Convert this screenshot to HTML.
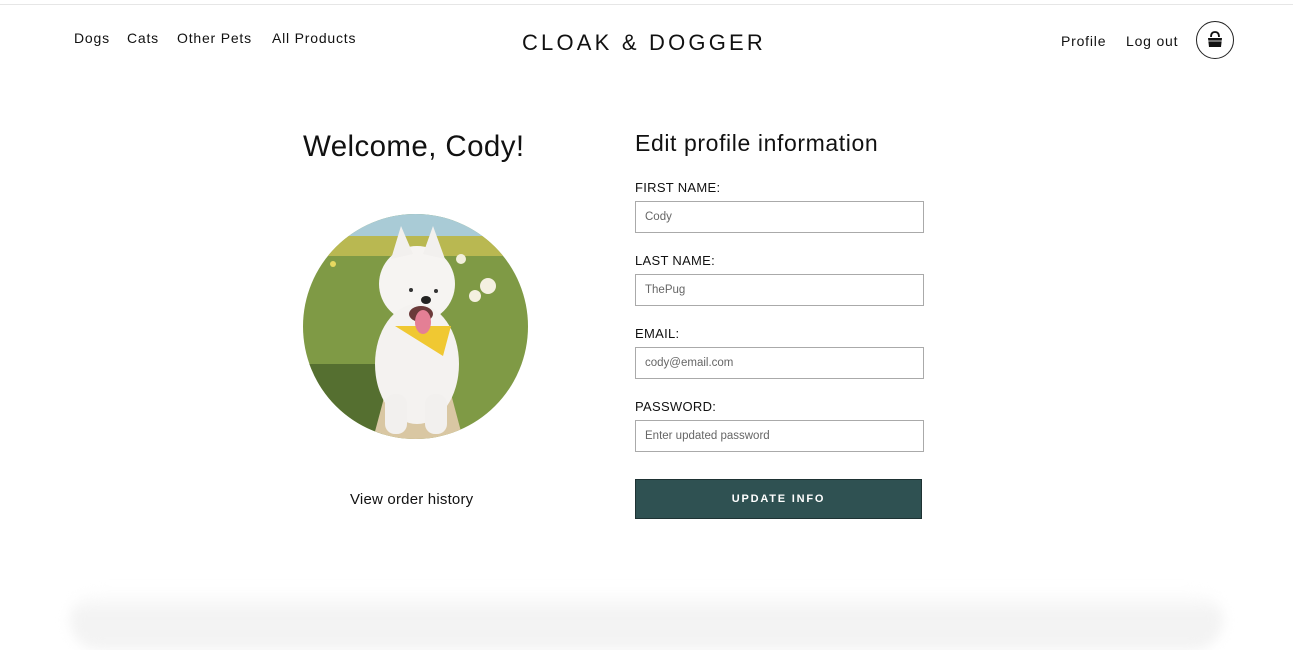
<!DOCTYPE html>
<html><head><meta charset="utf-8"><style>
body{margin:0;width:1293px;height:621px;overflow:hidden;background:#fff;font-family:"Liberation Sans",sans-serif;color:#111;position:relative}
.topline{position:absolute;top:4px;left:0;right:0;height:1px;background:#e6e6e6}
.nav a{position:absolute;top:30px;font-size:14px;letter-spacing:.8px;color:#111}
.logo{position:absolute;top:30px;left:0;width:1288px;text-align:center;font-size:22px;letter-spacing:3.2px}
.cart{position:absolute;left:1196px;top:21px;width:36px;height:36px;border:1px solid #222;border-radius:50%}
h1{position:absolute;left:303px;top:130px;margin:0;font-weight:400;font-size:29.5px;letter-spacing:.4px}
h2{position:absolute;left:635px;top:130px;margin:0;font-weight:400;font-size:23px;letter-spacing:.6px}
.lbl{position:absolute;left:635px;font-size:13px;letter-spacing:.3px}
.inp{position:absolute;left:635px;width:289px;height:32px;border:1px solid #aaa;box-sizing:border-box;font-size:11.5px;color:#666;padding:9px 9px;line-height:13px}
.btn{position:absolute;left:635px;top:479px;width:287px;height:40px;background:#2f5152;border:1px solid #1e3233;box-sizing:border-box;color:#fff;font-weight:700;font-size:11px;letter-spacing:1.8px;text-align:center;line-height:38px}
.hist{position:absolute;left:350px;top:491px;font-size:15px;letter-spacing:.2px}
.shadow{position:absolute;left:70px;right:70px;top:590px;height:60px;background:linear-gradient(#fff,#f3f3f3 40%);border-radius:30px;filter:blur(6px)}
</style></head><body>
<div class="topline"></div>
<div class="nav"><a style="left:74px">Dogs</a><a style="left:127px">Cats</a><a style="left:177px">Other Pets</a><a style="left:272px">All Products</a>
<a style="left:1061px;top:33px">Profile</a><a style="left:1126px;top:33px">Log out</a></div>
<div class="logo">CLOAK &amp; DOGGER</div>
<div class="cart"><svg width="36" height="36" viewBox="0 0 36 36"><path d="M14 15 Q14 10 18 10 Q22 10 22 15" fill="none" stroke="#111" stroke-width="1.8"/><path d="M11 16h14l-1 9h-12z" fill="#111"/><path d="M11 19h14" stroke="#fff" stroke-width=".8"/></svg></div>
<h1>Welcome, Cody!</h1>
<svg style="position:absolute;left:303px;top:214px" width="225" height="225" viewBox="0 0 225 225">
<defs><clipPath id="c"><circle cx="112.5" cy="112.5" r="112.5"/></clipPath></defs>
<g clip-path="url(#c)">
<rect width="225" height="225" fill="#7f9a45"/>
<rect width="225" height="25" fill="#a9cbd6"/>
<rect y="22" width="225" height="20" fill="#b9b851"/>
<rect x="0" y="150" width="80" height="75" fill="#556f30"/>
<path d="M70 225 L90 150 L140 150 L160 225z" fill="#d9c7a3"/>
<circle cx="185" cy="72" r="8" fill="#f4f0e0"/><circle cx="172" cy="82" r="6" fill="#f4f0e0"/><circle cx="158" cy="45" r="5" fill="#f2efdc"/><circle cx="30" cy="50" r="3" fill="#e6d860"/>
<ellipse cx="114" cy="70" rx="38" ry="38" fill="#f6f4f2"/>
<path d="M88 45 L98 12 L110 40z M120 40 L130 12 L142 45z" fill="#f2f0ee"/>
<ellipse cx="114" cy="150" rx="42" ry="60" fill="#f4f2f0"/>
<rect x="82" y="180" width="22" height="40" rx="10" fill="#f2f0ee"/><rect x="122" y="180" width="22" height="40" rx="10" fill="#f2f0ee"/>
<path d="M92 112 L148 112 L140 142z" fill="#f0c832"/>
<ellipse cx="118" cy="100" rx="12" ry="8" fill="#6b3a3a"/>
<ellipse cx="120" cy="108" rx="8" ry="12" fill="#e47f95"/>
<ellipse cx="123" cy="86" rx="5" ry="4" fill="#222"/>
<circle cx="108" cy="76" r="2" fill="#333"/><circle cx="133" cy="77" r="2" fill="#333"/>
</g></svg>
<div class="hist">View order history</div>
<h2>Edit profile information</h2>
<div class="lbl" style="top:180px">FIRST NAME:</div>
<div class="inp" style="top:201px">Cody</div>
<div class="lbl" style="top:253px">LAST NAME:</div>
<div class="inp" style="top:274px">ThePug</div>
<div class="lbl" style="top:326px">EMAIL:</div>
<div class="inp" style="top:347px">cody@email.com</div>
<div class="lbl" style="top:399px">PASSWORD:</div>
<div class="inp" style="top:420px">Enter updated password</div>
<div class="btn">UPDATE INFO</div>
<div class="shadow"></div>
</body></html>
